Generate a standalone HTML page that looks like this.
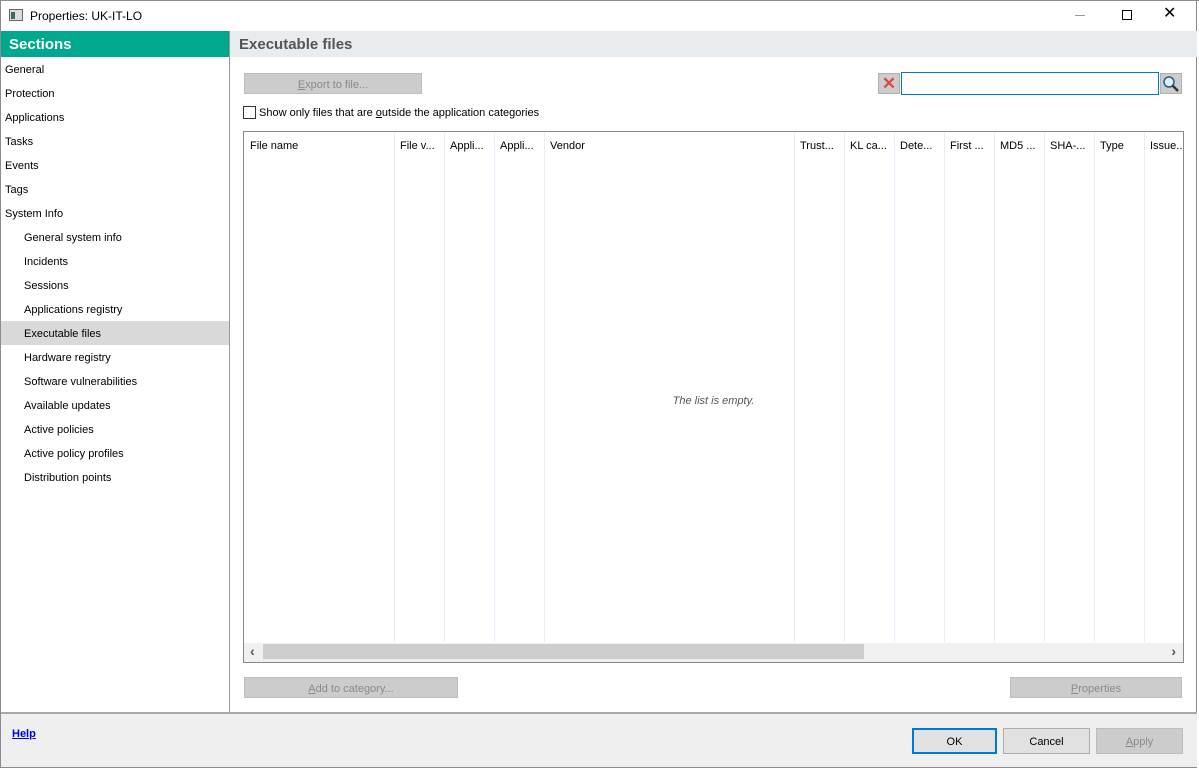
<!DOCTYPE html>
<html><head><style>
*{box-sizing:border-box;margin:0;padding:0}
body{width:1199px;height:768px;overflow:hidden;background:#fff;font-family:"Liberation Sans",sans-serif;font-size:11px;color:#000;position:relative}
.a{position:absolute}
.btn{position:absolute;background:#cccccc;border:1px solid #bdbdbd;color:#8a8a8a;text-align:center;font-size:11px}
.item{position:absolute;left:5px;font-size:11px}
.sub{left:24px}
.col{position:absolute;top:1px;bottom:20px;border-left:1px solid #e3eef9}
.h{position:absolute;top:8px;font-size:11px;white-space:nowrap;overflow:hidden}
</style></head><body>
<div class="a" style="left:0;top:0;width:1197px;height:768px;border:1px solid #8c8c8c;border-top:none"></div>
<div class="a" style="left:0;top:0;width:1199px;height:1px;background:#8c8c8c"></div>
<!-- title -->
<div class="a" style="left:9px;top:9px;width:14px;height:12px;border:1px solid #666;background:#ddd"><div class="a" style="left:1px;top:2px;width:4px;height:7px;background:#3a6b5a"></div></div>
<div class="a" style="left:30px;top:9px;font-size:12px">Properties: UK-IT-LO</div>
<div class="a" style="left:1075px;top:15px;width:10px;height:1px;background:#999"></div>
<div class="a" style="left:1122px;top:10px;width:10px;height:10px;border:1px solid #000"></div>
<div class="a" style="left:1163px;top:3px;font-size:16px">✕</div>
<!-- sidebar -->
<div class="a" style="left:1px;top:31px;width:228px;height:26px;background:#00a88e;color:#fff;font-weight:bold;font-size:15px;padding:5px 0 0 8px">Sections</div>
<div class="a" style="left:229px;top:31px;width:1px;height:682px;background:#999"></div>
<div class="a" style="left:230px;top:31px;width:967px;height:26px;background:#e8ecee;color:#555;font-weight:bold;font-size:15px;padding:5px 0 0 9px">Executable files</div>
<div class="a" style="left:1px;top:321px;width:228px;height:24px;background:#d9d9d9"></div>
<div class="item" style="top:64px">General</div>
<div class="item" style="top:88px">Protection</div>
<div class="item" style="top:112px">Applications</div>
<div class="item" style="top:136px">Tasks</div>
<div class="item" style="top:160px">Events</div>
<div class="item" style="top:184px">Tags</div>
<div class="item" style="top:208px">System Info</div>
<div class="item sub" style="top:232px">General system info</div>
<div class="item sub" style="top:256px">Incidents</div>
<div class="item sub" style="top:280px">Sessions</div>
<div class="item sub" style="top:304px">Applications registry</div>
<div class="item sub" style="top:328px">Executable files</div>
<div class="item sub" style="top:352px">Hardware registry</div>
<div class="item sub" style="top:376px">Software vulnerabilities</div>
<div class="item sub" style="top:400px">Available updates</div>
<div class="item sub" style="top:424px">Active policies</div>
<div class="item sub" style="top:448px">Active policy profiles</div>
<div class="item sub" style="top:472px">Distribution points</div>
<!-- top controls -->
<div class="btn" style="left:244px;top:73px;width:178px;height:21px;padding-top:5px"><u>E</u>xport to file...</div>
<div class="a" style="left:878px;top:73px;width:22px;height:21px;background:#ccc;border:1px solid #b0b0b0;color:#e04848;font-size:17px;text-align:center;line-height:19px;font-weight:bold">✕</div>
<div class="a" style="left:901px;top:72px;width:258px;height:23px;border:1px solid #0078d7;background:#fff"></div>
<div class="a" style="left:1160px;top:73px;width:22px;height:21px;background:#ccc;border:1px solid #b0b0b0">
<svg width="20" height="19" viewBox="0 0 20 19"><circle cx="8" cy="8" r="5" fill="#dbeefa" stroke="#2c5b8a" stroke-width="1.5"/><path d="M11.5 11.5L17 17" stroke="#333" stroke-width="2.5"/></svg></div>
<div class="a" style="left:243px;top:106px;width:13px;height:13px;border:1px solid #333"></div>
<div class="a" style="left:259px;top:107px;font-size:11px">Show only files that are <u>o</u>utside the application categories</div>
<!-- table -->
<div class="a" style="left:243px;top:131px;width:941px;height:532px;border:1px solid #828790">
<div class="col" style="left:150px"></div><div class="col" style="left:200px"></div><div class="col" style="left:250px"></div><div class="col" style="left:300px"></div><div class="col" style="left:550px"></div><div class="col" style="left:600px"></div><div class="col" style="left:650px"></div><div class="col" style="left:700px"></div><div class="col" style="left:750px"></div><div class="col" style="left:800px"></div><div class="col" style="left:850px"></div><div class="col" style="left:900px"></div>
<div class="h" style="left:6px">File name</div>
<div class="h" style="left:156px">File v...</div>
<div class="h" style="left:206px">Appli...</div>
<div class="h" style="left:256px">Appli...</div>
<div class="h" style="left:306px">Vendor</div>
<div class="h" style="left:556px">Trust...</div>
<div class="h" style="left:606px">KL ca...</div>
<div class="h" style="left:656px">Dete...</div>
<div class="h" style="left:706px">First ...</div>
<div class="h" style="left:756px">MD5 ...</div>
<div class="h" style="left:806px">SHA-...</div>
<div class="h" style="left:856px">Type</div>
<div class="h" style="left:906px;width:33px">Issue...</div>
<div class="a" style="left:0;top:263px;width:939px;text-align:center;font-style:italic;color:#555;font-size:11px">The list is empty.</div>
<div class="a" style="left:0;bottom:0;width:939px;height:19px;background:#f0f0f0">
<div class="a" style="left:19px;top:1px;width:601px;height:15px;background:#cdcdcd"></div>
<div class="a" style="left:6px;top:0px;font-size:14px;color:#555;font-weight:bold">‹</div>
<div class="a" style="right:7px;top:0px;font-size:14px;color:#555;font-weight:bold">›</div>
</div></div>
<div class="btn" style="left:244px;top:677px;width:214px;height:21px;padding-top:5px"><u>A</u>dd to category...</div>
<div class="btn" style="left:1010px;top:677px;width:172px;height:21px;padding-top:5px"><u>P</u>roperties</div>
<!-- footer -->
<div class="a" style="left:1px;top:712px;width:1196px;height:2px;background:#a8a8a8"></div>
<div class="a" style="left:1px;top:714px;width:1196px;height:53px;background:#efefef"></div>
<div class="a" style="left:12px;top:728px;color:#0000ee;font-weight:bold;text-decoration:underline;font-size:11px">Help</div>
<div class="a" style="left:912px;top:728px;width:85px;height:26px;background:#e1e1e1;border:2px solid #0078d7;text-align:center;padding-top:6px;font-size:11px">OK</div>
<div class="a" style="left:1003px;top:728px;width:87px;height:26px;background:#e1e1e1;border:1px solid #adadad;text-align:center;padding-top:7px;font-size:11px">Cancel</div>
<div class="btn" style="left:1096px;top:728px;width:87px;height:26px;padding-top:7px"><u>A</u>pply</div>
</body></html>
